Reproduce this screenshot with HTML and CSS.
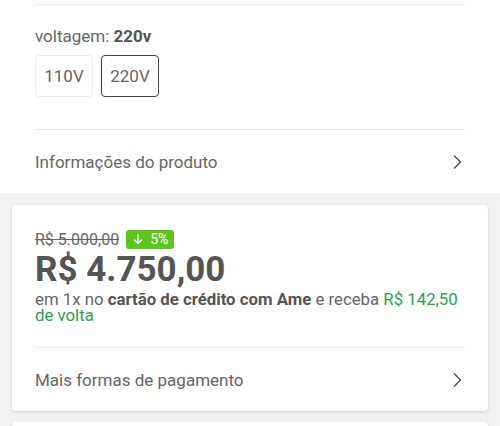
FILE: index.html
```html
<!DOCTYPE html>
<html lang="pt-BR">
<head>
<meta charset="utf-8">
<link rel="stylesheet" href="styles.css">
</head>
<body>
<section class="top">
  <div class="top-line"></div>
  <div class="label">voltagem: <b>220v</b></div>
  <div class="options">
    <div class="opt">110V</div>
    <div class="opt selected">220V</div>
  </div>
  <div class="row">
    <span>Informações do produto</span>
    <svg class="chev" width="10" height="16" viewBox="0 0 10 16"><path d="M2 1.5 L8.5 8 L2 14.5" fill="none" stroke="#555" stroke-width="1.5"/></svg>
  </div>
</section>
<section class="gray">
  <div class="card">
    <div class="price-box">
      <div class="old-row">
        <span class="old">R$ 5.000,00</span>
        <span class="badge"><svg width="10" height="12" viewBox="0 0 10 12"><path d="M5 1 V10.5 M1 6.5 L5 10.5 L9 6.5" fill="none" stroke="#fff" stroke-width="1.3"/></svg>5%</span>
      </div>
      <div class="price">R$ 4.750,00</div>
      <div class="desc">em 1x no <b>cartão de crédito com Ame</b> e receba <span class="green">R$ 142,50 de volta</span></div>
    </div>
    <div class="row card-row">
      <span>Mais formas de pagamento</span>
      <svg class="chev" width="10" height="16" viewBox="0 0 10 16"><path d="M2 1.5 L8.5 8 L2 14.5" fill="none" stroke="#555" stroke-width="1.5"/></svg>
    </div>
  </div>
  <div class="card next"></div>
</section>
</body>
</html>
```
FILE: styles.css
```css
html, body {
  margin: 0;
  padding: 0;
}
body {
  width: 500px;
  height: 426px;
  overflow: hidden;
  background: #f1f1f1;
  font-family: Roboto, "Liberation Sans", sans-serif;
  color: #666;
}
.top {
  background: #fff;
  padding: 0 35px;
}
.top-line {
  height: 4px;
  border-bottom: 1px solid #ececec;
}
.label {
  font-size: 17px;
  line-height: 20px;
  margin-top: 21px;
  color: #666;
}
.label b {
  color: #555;
  font-weight: 700;
}
.options {
  display: flex;
  gap: 8px;
  margin-top: 9px;
}
.opt {
  width: 56px;
  height: 40px;
  border: 1px solid #eeeeee;
  border-radius: 4px;
  display: flex;
  align-items: center;
  justify-content: center;
  font-size: 17px;
  color: #666;
}
.opt.selected {
  border-color: #444;
}
.row {
  display: flex;
  align-items: center;
  justify-content: space-between;
  height: 63px;
  border-top: 1px solid #ececec;
  margin-top: 32px;
  font-size: 17px;
  color: #666;
}
.chev {
  margin-right: 3px;
}
.gray {
  padding: 12px 12px 0;
}
.card {
  background: #fff;
  border-radius: 4px;
  box-shadow: 0 1px 3px rgba(0,0,0,0.15);
  padding: 0 23px;
}
.price-box {
  padding-top: 24px;
  padding-bottom: 24px;
}
.old-row {
  display: flex;
  align-items: center;
  gap: 7px;
  height: 20px;
}
.old {
  font-size: 16px;
  text-decoration: line-through;
  color: #666;
}
.badge {
  background: #5fc61e;
  color: #fff;
  font-size: 14px;
  border-radius: 3px;
  height: 19px;
  padding: 0 6px 0 7px;
  display: flex;
  align-items: center;
  gap: 7px;
}
.price {
  font-size: 35px;
  font-weight: 700;
  color: #555;
  line-height: 41px;
}
.desc {
  font-size: 16.8px;
  line-height: 16px;
  color: #666;
  padding-top: 1px;
}
.desc b {
  color: #555;
}
.green {
  color: #2e9e52;
}
.card-row {
  margin-top: 0;
  height: 63px;
}
.card.next {
  margin-top: 11px;
  height: 20px;
}
```
